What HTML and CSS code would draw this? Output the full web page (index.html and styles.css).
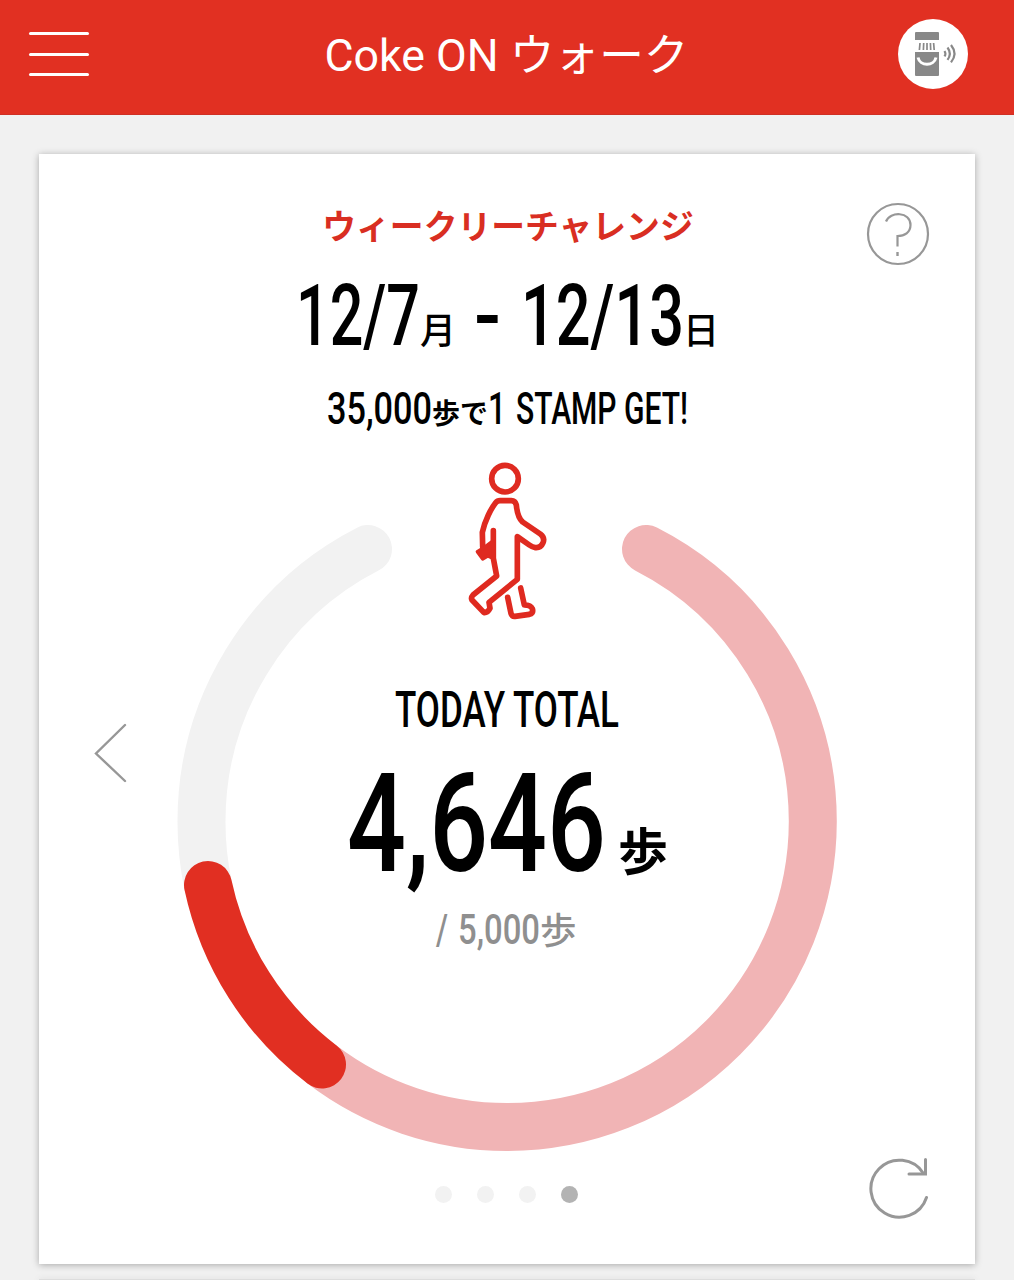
FILE: index.html
```html
<!DOCTYPE html>
<html lang="ja">
<head>
    <meta charset="UTF-8">
    <meta name="viewport" content="width=device-width, initial-scale=1.0">
    <title>Coke ON ウォーク</title>
    <link rel="stylesheet" href="styles.css">
</head>
<body>
    <header class="app-header">
        <button class="menu-button" aria-label="メニュー">
            <span></span>
            <span></span>
            <span></span>
        </button>
        <h1 class="app-title">Coke ON ウォーク</h1>
        <button class="vending-button" aria-label="自販機に接続">
            <svg width="70" height="70" viewBox="0 0 70 70">
                <g fill="#888">
                    <path d="M18 13h22a1 1 0 0 1 1 1v7H17v-7a1 1 0 0 1 1-1z"/>
                    <path d="M17 33h24v23a1 1 0 0 1-1 1H18a1 1 0 0 1-1-1z"/>
                </g>
                <path d="M22 24l-.6 7M25.7 24l-.3 7M29 24v7M32.4 24l.3 7M35.6 24l.6 7" stroke="#888" stroke-width="1.7" fill="none"/>
                <path d="M20 38.500c2 9 16 9 18 0" stroke="#fff" stroke-width="3" fill="none"/>
                <path d="M46.500 32q1.800 2.700 0 5.400M49.500 28.500q4.600 6.200 0 12.400M53 26q7 8.700 0 17.400" stroke="#888" stroke-width="2.200" fill="none"/>
            </svg>
        </button>
    </header>

    <main class="content">
        <section class="card">
            <div class="card-head">
                <h2 class="challenge-title">ウィークリーチャレンジ</h2>
                <button class="help-button" aria-label="ヘルプ">
                    <svg width="64" height="64" viewBox="0 0 64 64">
                        <circle cx="32" cy="32" r="30" stroke-width="2.200"/>
                        <path d="M20 19.500C24 9 44.500 9.500 44.500 23c0 7.500-6 11-13 11v10.500" stroke-width="2.200"/>
                        <path d="M31.500 50v4" stroke-width="2.400"/>
                    </svg>
                </button>
            </div>

            <!-- condensed lettering: widths are set with textLength -->
            <svg class="line date-line" width="440" height="94" viewBox="287 266 440 94">
                <text x="296" y="345" textLength="124" lengthAdjust="spacingAndGlyphs">12/7</text>
                <text class="kanji" x="420" y="344">月</text>
                <text x="474" y="345" textLength="27" lengthAdjust="spacingAndGlyphs">-</text>
                <text x="521" y="345" textLength="163" lengthAdjust="spacingAndGlyphs">12/13</text>
                <text class="kanji" x="683" y="344">日</text>
            </svg>
            <svg class="line goal-line" width="440" height="60" viewBox="287 380 440 60">
                <text x="327" y="424" textLength="105" lengthAdjust="spacingAndGlyphs">35,000</text>
                <text class="kanji" x="432" y="424">歩で</text>
                <text x="488" y="424" textLength="18" lengthAdjust="spacingAndGlyphs">1</text>
                <text x="516" y="424" textLength="172" lengthAdjust="spacingAndGlyphs">STAMP GET!</text>
            </svg>

            <div class="progress">
                <svg class="ring" width="680" height="710" viewBox="167 450 680 710">
                    <path class="ring-track" d="M368 549A305.800 305.800 0 0 0 201.500 821.300A305.800 305.800 0 0 0 208 885"/>
                    <path class="ring-week" d="M646 549A305.800 305.800 0 0 1 812.800 821.300A305.800 305.800 0 0 1 507 1127A305.800 305.800 0 0 1 322 1064.500"/>
                    <path class="ring-today" d="M322 1064.500A305.800 305.800 0 0 1 208 885"/>
                </svg>
                <button class="prev-button" aria-label="前へ">
                    <svg width="34" height="60" viewBox="0 0 34 60">
                        <path d="M32 2L3 30.500L32 58"/>
                    </svg>
                </button>
                <div class="progress-text">
                    <svg class="walker" width="130" height="180" viewBox="6 0 390 540">
                        <circle cx="195" cy="86" r="40"/>
                        <path d="M128 290L127 247C134 213 154 174 167 158Q172 152 180 152H214Q226 152 229 165C231 187 235 205 248 216L301 252C321 267 307 295 286 293Q278 292 268 285L232 260V388L147 457L150 475Q143 489 132 488L96 450Q92 443 99 435L170 378L160 325V242"/>
                        <path d="M203 442L213 490Q216 500 225 499L268 493Q281 489 277 476Q272 465 253 465L242 414"/>
                        <path class="bag" d="M112 305L130 294L157 274L162 326L143 318L128 327Z"/>
                    </svg>
                    <svg class="line today-line" width="440" height="60" viewBox="287 680 440 60">
                        <text x="395" y="727" textLength="224" lengthAdjust="spacingAndGlyphs">TODAY TOTAL</text>
                    </svg>
                    <svg class="line count-line" width="440" height="130" viewBox="287 760 440 130">
                        <text x="347" y="871" textLength="259" lengthAdjust="spacingAndGlyphs">4,646</text>
                        <text class="kanji" x="618" y="870">歩</text>
                    </svg>
                    <svg class="line target-line" width="440" height="55" viewBox="287 905 440 55">
                        <text x="436" y="944" textLength="12" lengthAdjust="spacingAndGlyphs">/</text>
                        <text x="458" y="944" textLength="82" lengthAdjust="spacingAndGlyphs">5,000</text>
                        <text class="kanji" x="540" y="944">歩</text>
                    </svg>
                </div>
            </div>

            <div class="card-foot">
                <div class="dots">
                    <span class="dot"></span>
                    <span class="dot"></span>
                    <span class="dot"></span>
                    <span class="dot active"></span>
                </div>
                <button class="refresh-button" aria-label="更新">
                    <svg width="64" height="64" viewBox="0 0 64 64">
                        <path d="M60.500 41.500A28.500 28.500 0 1 1 57.500 17.500"/>
                        <path d="M59.500 3.500V18H43"/>
                    </svg>
                </button>
            </div>
        </section>

        <section class="card next-card"></section>
    </main>
</body>
</html>
```
FILE: styles.css
```css
* {
    margin: 0;
    padding: 0;
    box-sizing: border-box;
}

body {
    background: #f1f1f1;
    height: 1280px;
    overflow: hidden;
    font-family: Roboto, "Noto Sans CJK JP", sans-serif;
    color: #000;
}

button {
    background: none;
    border: none;
    cursor: pointer;
}

svg {
    display: block;
}

.app-header {
    display: grid;
    grid-template-columns: 1fr auto 1fr;
    align-items: center;
    height: 115px;
    padding: 0 46px 6px 29px;
    background: #e13022;
    border-bottom: 1px solid #cf3025;
}

.menu-button {
    display: flex;
    flex-direction: column;
    gap: 17.500px;
    width: 60px;
}

.menu-button span {
    height: 3px;
    border-radius: 2px;
    background: #fff;
}

.app-title {
    color: #fff;
    font-size: 44.700px;
    font-weight: 400;
    line-height: 60px;
    white-space: nowrap;
    padding: 3px 0 0 16px;
}

.vending-button {
    justify-self: end;
    width: 70px;
    height: 70px;
    border-radius: 50%;
    background: #fff;
}

.content {
    display: flex;
    flex-direction: column;
    gap: 15px;
    padding: 39px 39px 0;
}

.card {
    height: 1110px;
    padding-top: 46px;
    background: #fff;
    box-shadow: 0 1px 7px rgba(0, 0, 0, 0.3);
}

.next-card {
    height: 1px;
    padding: 0;
    background: #ddd;
}

.card-head {
    display: grid;
    grid-template-columns: 1fr auto 1fr;
    height: 66px;
    padding: 0 45px;
}

.challenge-title {
    grid-column: 2;
    color: #d92e22;
    font-family: "Noto Sans CJK JP", sans-serif;
    font-size: 33.800px;
    font-weight: 700;
    line-height: 49px;
    padding-left: 2px;
}

.help-button {
    justify-self: end;
    align-self: end;
    width: 64px;
    height: 64px;
}

.help-button svg,
.refresh-button svg,
.prev-button svg {
    fill: none;
    stroke: #979797;
}

.line {
    margin: 0 auto;
    overflow: visible;
    font-family: Roboto, sans-serif;
}

.kanji {
    font-family: "Noto Sans CJK JP", sans-serif;
}

.date-line {
    font-size: 84.500px;
    font-weight: 500;
}

.date-line .kanji {
    font-size: 36px;
    font-weight: 500;
}

.goal-line {
    margin-top: 20px;
    font-size: 44.500px;
    font-weight: 500;
}

.goal-line .kanji {
    font-size: 28px;
    font-weight: 700;
}

.progress {
    display: grid;
    margin-top: 10px;
    height: 710px;
}

.ring,
.prev-button,
.progress-text {
    grid-area: 1 / 1;
}

.ring {
    justify-self: center;
    fill: none;
    stroke-width: 48;
    stroke-linecap: round;
}

.ring-track {
    stroke: #f2f2f2;
}

.ring-week {
    stroke: #f1b4b5;
}

.ring-today {
    stroke: #e12f22;
}

.prev-button {
    justify-self: start;
    align-self: start;
    margin: 273px 0 0 54px;
}

.prev-button svg {
    stroke-width: 2.400;
    stroke-linecap: round;
}

.progress-text {
    display: flex;
    flex-direction: column;
    align-items: center;
}

.walker {
    fill: none;
    stroke: #df2a20;
    stroke-width: 17;
    stroke-linecap: round;
    stroke-linejoin: round;
}

.walker .bag {
    fill: #df2a20;
    stroke-width: 10;
}

.today-line {
    margin-top: 50px;
    font-size: 50.500px;
    font-weight: 500;
}

.count-line {
    margin-top: 20px;
    font-size: 136.500px;
    font-weight: 500;
}

.count-line .kanji {
    font-size: 50px;
    font-weight: 700;
}

.target-line {
    margin-top: 15px;
    font-size: 43px;
    font-weight: 500;
    fill: #8f8f8f;
}

.target-line .kanji {
    font-size: 36.500px;
    font-weight: 500;
}

.card-foot {
    display: grid;
    grid-template-columns: 1fr auto 1fr;
    height: 69px;
    padding: 0 45px;
    align-items: center;
}

.dots {
    grid-column: 2;
    display: flex;
    gap: 25px;
    margin-right: 2px;
}

.dot {
    width: 17px;
    height: 17px;
    border-radius: 50%;
    background: #f2f2f2;
}

.dot.active {
    background: #b3b3b3;
}

.refresh-button {
    justify-self: end;
    align-self: start;
    margin-top: -4px;
}

.refresh-button svg {
    stroke-width: 3;
    stroke-linecap: round;
}
```
